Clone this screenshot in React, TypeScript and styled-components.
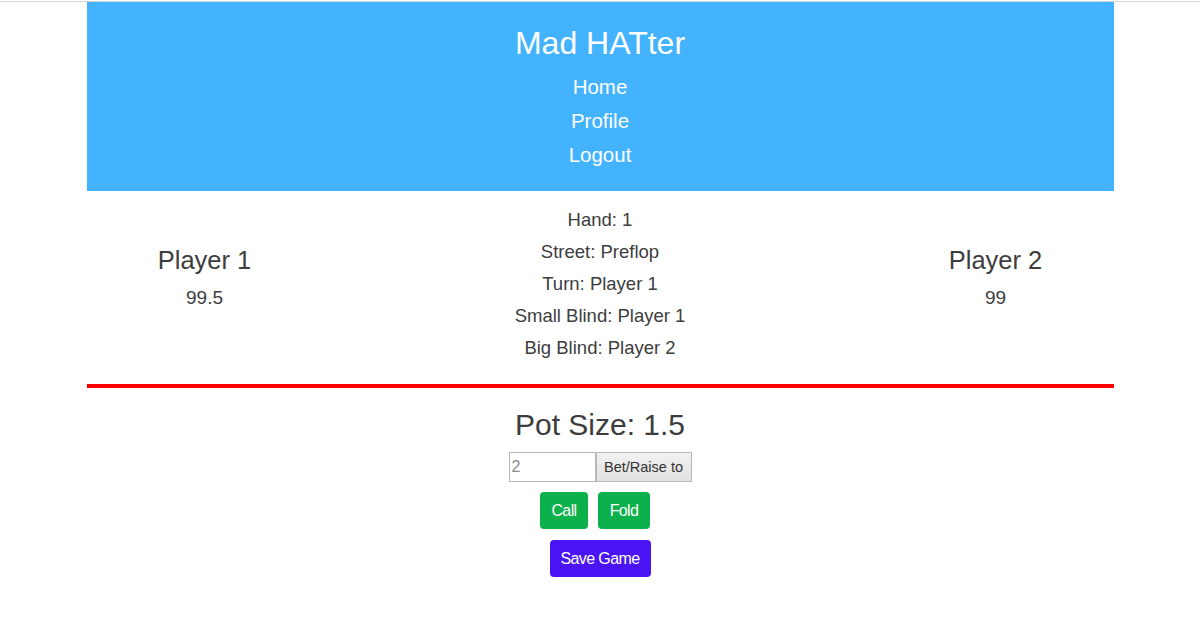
import React from "react";
import styled, { createGlobalStyle } from "styled-components";

const Global = createGlobalStyle`
  html, body { background: #fff; }
  body {
    margin: 0;
    padding-top: 1px;
    font-family: "Liberation Sans", Arial, sans-serif;
    color: #3d3d3d;
  }
  body::before {
    content: "";
    display: block;
    height: 1px;
    background: #d4d4d4;
  }
`;

const Container = styled.div`
  width: 1027px;
  margin: 0 auto;
`;

const Header = styled.header`
  background: #44b3ff;
  padding: 22px 0 19px;
  text-align: center;
  color: #fff;
`;

const Title = styled.h1`
  margin: 0 0 8px;
  font-size: 32px;
  line-height: 38px;
  font-weight: 400;
`;

const Nav = styled.nav`
  display: flex;
  flex-direction: column;
  align-items: center;
`;

const NavLink = styled.a`
  color: #fff;
  text-decoration: none;
  font-size: 20.5px;
  line-height: 34px;
`;

const Table = styled.section`
  display: grid;
  grid-template-columns: 236px 1fr 236px;
  padding: 13px 0 20px;
  align-items: start;
`;

const PlayerCol = styled.div`
  display: flex;
  flex-direction: column;
  align-items: center;
  padding-top: 41px;
`;

const PlayerName = styled.div`
  font-size: 25.5px;
  line-height: 30px;
`;

const Stack = styled.div`
  margin-top: 12px;
  font-size: 19px;
  line-height: 22px;
`;

const InfoCol = styled.div`
  display: flex;
  flex-direction: column;
  align-items: center;
`;

const InfoLine = styled.div`
  font-size: 18.5px;
  line-height: 32px;
`;

const Divider = styled.div`
  height: 4px;
  background: #ff0000;
`;

const Controls = styled.section`
  display: flex;
  flex-direction: column;
  align-items: center;
  padding-top: 20px;
`;

const Pot = styled.div`
  font-size: 30px;
  line-height: 34px;
`;

const BetRow = styled.div`
  display: flex;
  margin-top: 10px;
`;

const BetInput = styled.input`
  box-sizing: border-box;
  width: 87px;
  height: 30px;
  border: 1px solid #b8b8b8;
  padding: 0 2px;
  font-family: "Liberation Sans", Arial, sans-serif;
  font-size: 16px;
  outline: none;
  &::placeholder { color: #8a8a8a; }
`;

const BetButton = styled.button`
  box-sizing: border-box;
  width: 96px;
  height: 30px;
  border: 1px solid #b8b8b8;
  background: linear-gradient(#f2f2f2, #e0e0e0);
  font-family: "Liberation Sans", Arial, sans-serif;
  font-size: 14.5px;
  color: #333;
  padding: 0;
`;

const ActionRow = styled.div`
  display: flex;
  margin-top: 10px;
`;

const ActionButton = styled.button<{ $w: number; $bg: string; $mr?: number }>`
  box-sizing: border-box;
  width: ${(p) => p.$w}px;
  height: 37px;
  margin-right: ${(p) => p.$mr ?? 0}px;
  border: none;
  border-radius: 4px;
  background: ${(p) => p.$bg};
  color: #fff;
  font-family: "Liberation Sans", Arial, sans-serif;
  font-size: 16px;
  letter-spacing: -0.6px;
  padding: 0;
`;

const SaveRow = styled.div`
  margin-top: 11px;
`;

export default function App() {
  return (
    <>
      <Global />
      <Container>
        <Header>
          <Title>Mad HATter</Title>
          <Nav>
            <NavLink href="#">Home</NavLink>
            <NavLink href="#">Profile</NavLink>
            <NavLink href="#">Logout</NavLink>
          </Nav>
        </Header>
        <Table>
          <PlayerCol>
            <PlayerName>Player 1</PlayerName>
            <Stack>99.5</Stack>
          </PlayerCol>
          <InfoCol>
            <InfoLine>Hand: 1</InfoLine>
            <InfoLine>Street: Preflop</InfoLine>
            <InfoLine>Turn: Player 1</InfoLine>
            <InfoLine>Small Blind: Player 1</InfoLine>
            <InfoLine>Big Blind: Player 2</InfoLine>
          </InfoCol>
          <PlayerCol>
            <PlayerName>Player 2</PlayerName>
            <Stack>99</Stack>
          </PlayerCol>
        </Table>
        <Divider />
        <Controls>
          <Pot>Pot Size: 1.5</Pot>
          <BetRow>
            <BetInput placeholder="2" />
            <BetButton>Bet/Raise to</BetButton>
          </BetRow>
          <ActionRow>
            <ActionButton $w={48} $bg="#0db14b" $mr={10}>Call</ActionButton>
            <ActionButton $w={52} $bg="#0db14b" $mr={10}>Fold</ActionButton>
          </ActionRow>
          <SaveRow>
            <ActionButton $w={101} $bg="#4a14f5">Save Game</ActionButton>
          </SaveRow>
        </Controls>
      </Container>
    </>
  );
}
